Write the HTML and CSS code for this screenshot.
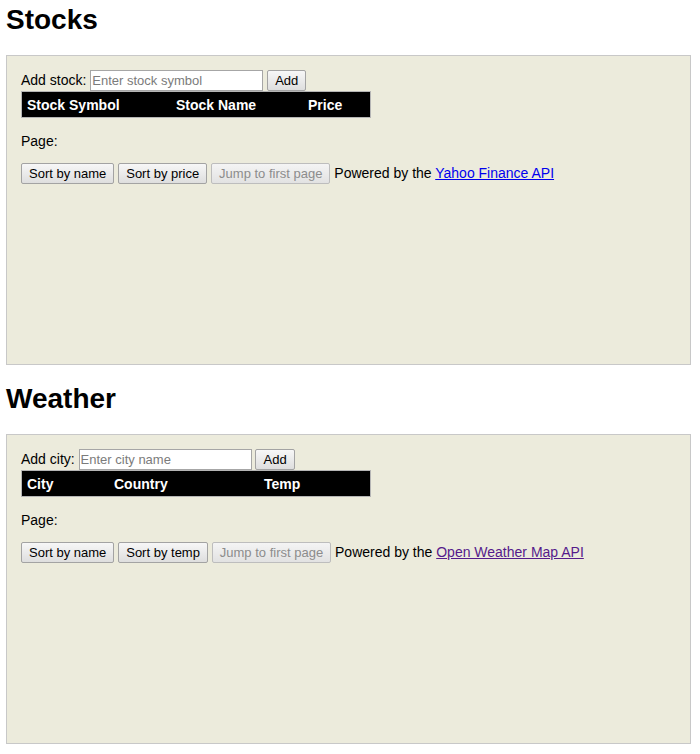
FILE: index.html
```html
<!DOCTYPE html>
<html>
<head>
<meta charset="utf-8">
<title>Widgets</title>
<link rel="stylesheet" href="styles.css">
</head>
<body>
<div class="page">
  <section class="widget">
    <h1 class="title">Stocks</h1>
    <div class="panel">
      <div class="add-row">Add stock: <input type="text" class="add-input" placeholder="Enter stock symbol"> <button type="button" class="btn">Add</button></div>
      <table class="grid">
        <thead>
          <tr><th class="s1">Stock Symbol</th><th class="s2">Stock Name</th><th>Price</th></tr>
        </thead>
      </table>
      <p class="pager">Page:</p>
      <div class="actions"><button type="button" class="btn">Sort by name</button> <button type="button" class="btn">Sort by price</button> <button type="button" class="btn" disabled>Jump to first page</button> Powered by the <a href="#yahoo" class="link">Yahoo Finance API</a></div>
    </div>
  </section>
  <section class="widget">
    <h1 class="title">Weather</h1>
    <div class="panel">
      <div class="add-row">Add city: <input type="text" class="add-input" placeholder="Enter city name"> <button type="button" class="btn">Add</button></div>
      <table class="grid">
        <thead>
          <tr><th class="w1">City</th><th class="w2">Country</th><th>Temp</th></tr>
        </thead>
      </table>
      <p class="pager">Page:</p>
      <div class="actions"><button type="button" class="btn">Sort by name</button> <button type="button" class="btn">Sort by temp</button> <button type="button" class="btn" disabled>Jump to first page</button> Powered by the <a href="#weather" class="link visited">Open Weather Map API</a></div>
    </div>
  </section>
</div>
</body>
</html>
```

FILE: styles.css
```css
html, body {
  margin: 0;
  padding: 0;
  background: #fff;
}
body {
  font-family: "Liberation Sans", Arial, sans-serif;
  font-size: 14px;
  color: #000;
}
.page {
  padding: 4px 0 0 6px;
}
.title {
  font-size: 28px;
  font-weight: bold;
  margin: 0 0 19px 0;
  line-height: 32px;
}
.widget + .widget .title {
  margin-top: 18px;
}
.panel {
  box-sizing: border-box;
  width: 685px;
  height: 310px;
  background: #ecebdc;
  border: 1px solid #c8c8c8;
  padding: 14px;
}
.add-row {
  line-height: 21px;
  height: 21px;
}
.add-input {
  font-family: "Liberation Sans", Arial, sans-serif;
  font-size: 13px;
  width: 173px;
  height: 21px;
  box-sizing: border-box;
  vertical-align: top;
  margin: 0;
  padding: 1px 1px;
  border: 1px solid #a6a6a6;
  background: #fff;
  color: #000;
  outline: none;
}
.add-input::placeholder {
  color: #7b7b7b;
}
.btn {
  font-family: "Liberation Sans", Arial, sans-serif;
  font-size: 13px;
  height: 21px;
  box-sizing: border-box;
  margin: 0;
  padding: 0 7px;
  border: 1px solid #a3a3a3;
  border-radius: 2px;
  background: linear-gradient(#f7f7f7, #dedede);
  color: #000;
  line-height: 17px;
  vertical-align: top;
}
.btn:disabled {
  color: #8c8c8c;
  border-color: #bdbdbd;
  background: linear-gradient(#f4f4f4, #e2e2e2);
}
.grid {
  border-collapse: collapse;
  width: 350px;
  border: 1px solid #b5b5b5;
  background: #000;
}
.grid th {
  color: #fff;
  font-weight: bold;
  text-align: left;
  padding: 5px 5px 4px;
  line-height: 16px;
  font-size: 14px;
}
.s1 { width: 139px; }
.s2 { width: 122px; }
.w1 { width: 77px; }
.w2 { width: 140px; }
.pager {
  margin: 15px 0 14px;
  line-height: 16px;
}
.actions {
  line-height: 21px;
  height: 21px;
}
.link {
  color: #0000ee;
}
.link.visited {
  color: #551a8b;
}
```
